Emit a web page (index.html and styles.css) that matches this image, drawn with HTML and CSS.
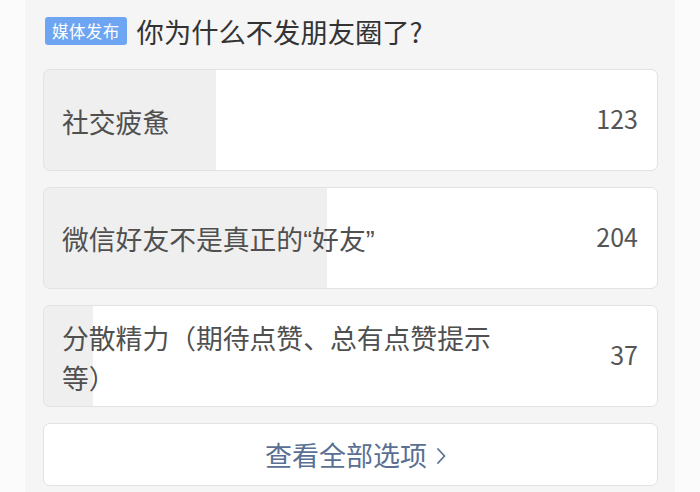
FILE: index.html
```html
<!DOCTYPE html>
<html lang="zh-CN">
<head>
<meta charset="utf-8">
<title>投票</title>
<link rel="stylesheet" href="styles.css">
</head>
<body>
<div class="panel">
  <div class="header">
    <span class="badge">媒体发布</span>
    <h1 class="title">你为什么不发朋友圈了?</h1>
  </div>
  <div class="options">
    <div class="option" style="--p: 172px">
      <span class="label">社交疲惫</span>
      <span class="count">123</span>
    </div>
    <div class="option" style="--p: 283px">
      <span class="label">微信好友不是真正的<span class="q">“</span>好友<span class="q">”</span></span>
      <span class="count">204</span>
    </div>
    <div class="option" style="--p: 49px">
      <span class="label">分散精力（期待点赞、总有点赞提示等）</span>
      <span class="count">37</span>
    </div>
    <div class="more">
      <span>查看全部选项</span>
      <svg class="chev" width="10" height="18" viewBox="0 0 10 18"><path d="M2 2 L8.5 9 L2 16" fill="none" stroke="#5a6f93" stroke-width="1.8" stroke-linecap="round" stroke-linejoin="round"/></svg>
    </div>
  </div>
</div>
</body>
</html>
```
FILE: styles.css
```css
html, body {
  margin: 0;
  padding: 0;
}
body {
  background: #fbfbfb;
  font-family: "Noto Sans CJK SC", "Noto Sans", sans-serif;
  width: 700px;
  height: 492px;
  overflow: hidden;
}
.panel {
  margin-left: 25px;
  width: 650px;
  height: 492px;
  box-sizing: border-box;
  background: #f5f5f5;
  padding: 15px 17px 0 18px;
}
.header {
  display: flex;
  align-items: center;
  height: 32px;
  gap: 10px;
  padding-left: 2px;
}
.badge {
  background: #6ea5f2;
  color: #fff;
  font-size: 16.5px;
  line-height: 28px;
  height: 28px;
  padding: 0 7px;
  border-radius: 3px;
  letter-spacing: 0.4px;
}
.title {
  margin: 0;
  font-weight: normal;
  font-size: 27.3px;
  color: #333;
  line-height: 32px;
}
.options {
  margin-top: 22px;
  display: flex;
  flex-direction: column;
  gap: 16px;
}
.option {
  height: 102px;
  box-sizing: border-box;
  border: 1px solid #e2e2e2;
  border-radius: 7px;
  background: linear-gradient(to right, #efefef var(--p), #ffffff var(--p));
  display: flex;
  align-items: center;
  justify-content: space-between;
  padding: 0 19px 0 18px;
  color: #505050;
}
.label {
  font-size: 26.8px;
  line-height: 40px;
  max-width: 445px;
  padding-top: 3px;
}
.q {
  font-family: "Liberation Sans", sans-serif;
}
.count {
  font-size: 25px;
  line-height: 32px;
  padding-bottom: 4px;
  color: #555;
}
.more {
  height: 63px;
  box-sizing: border-box;
  border: 1px solid #e2e2e2;
  border-radius: 7px;
  background: #fff;
  display: flex;
  align-items: center;
  justify-content: center;
  gap: 9px;
  color: #5a6f93;
  font-size: 27px;
  padding-left: 10px;
}
.chev {
  margin-top: 2px;
}
```
